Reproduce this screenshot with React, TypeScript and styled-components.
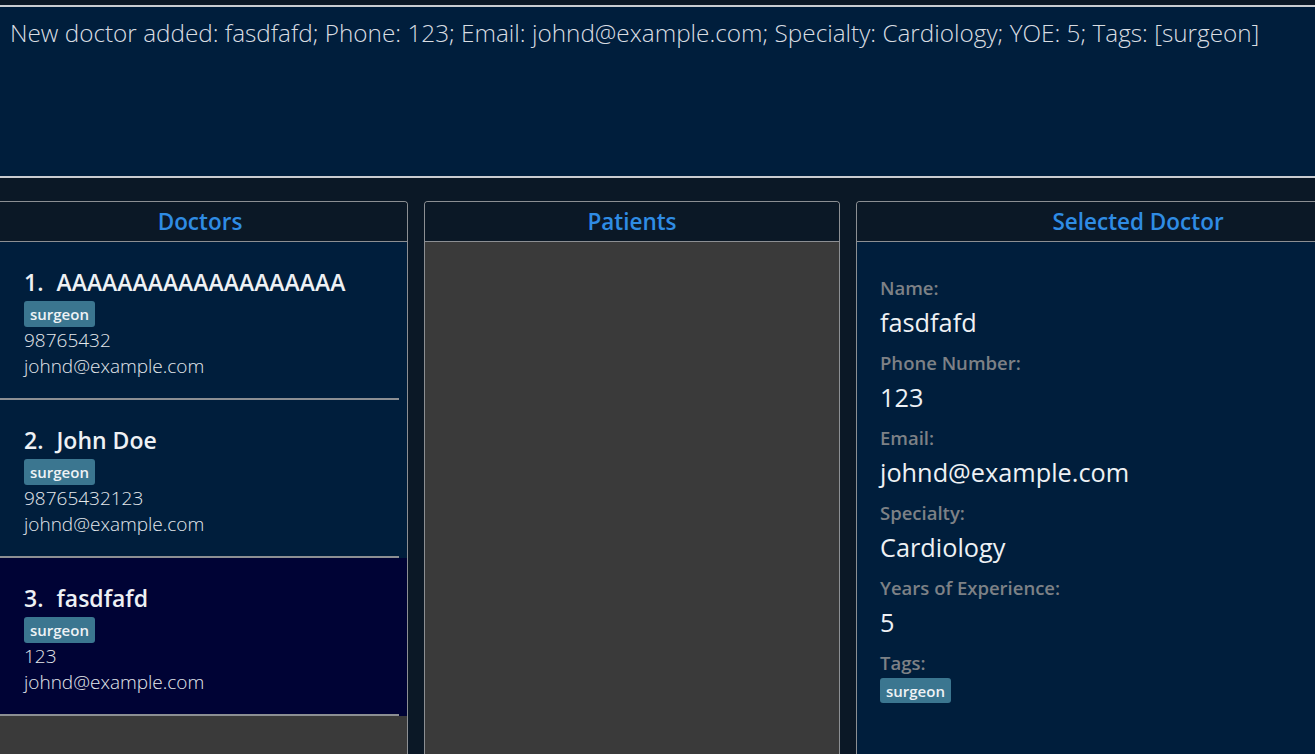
import { Fragment } from 'react';
import { createGlobalStyle, styled } from 'styled-components';

const GlobalStyle = createGlobalStyle`
  html, body {
    margin: 0;
    padding: 0;
    background: #0b1826;
    overflow: hidden;
  }
  * {
    box-sizing: border-box;
  }
`;

const Root = styled.div`
  width: 1315px;
  height: 754px;
  overflow: hidden;
  display: flex;
  flex-direction: column;
  padding-top: 5px;
  background: #0b1826;
  font-family: 'Open Sans', 'Noto Sans', sans-serif;
`;

const ResultBox = styled.div`
  height: 173px;
  flex-shrink: 0;
  background: #001e3c;
  border-top: 2px solid #c9ccd0;
  border-bottom: 2px solid #c9ccd0;
  padding: 11px 10px;
  color: #d9dde2;
  font-size: 24.3px;
  font-weight: 300;
  line-height: 30px;
  white-space: nowrap;
`;

const PanelRow = styled.div`
  flex: 1;
  display: flex;
  flex-direction: row;
  gap: 16px;
  margin-left: -8px;
  padding-top: 23px;
  min-height: 0;
`;

const Panel = styled.section<{ $width: number }>`
  width: ${(p) => p.$width}px;
  flex-shrink: 0;
  display: flex;
  flex-direction: column;
  border: 1.5px solid #8c8f93;
  border-bottom: none;
  border-radius: 4px 4px 0 0;
  overflow: hidden;
`;

const PanelHeader = styled.header`
  height: 40px;
  flex-shrink: 0;
  display: flex;
  align-items: center;
  justify-content: center;
  background: #0b1826;
  border-bottom: 1.5px solid #8c8f93;
  color: #2f8ce4;
  font-size: 22.5px;
  font-weight: 600;
`;

const PanelBody = styled.div<{ $bg: string }>`
  flex: 1;
  display: flex;
  flex-direction: column;
  background: ${(p) => p.$bg};
`;

const DoctorCell = styled.div<{ $selected?: boolean }>`
  height: 158px;
  flex-shrink: 0;
  display: flex;
  flex-direction: column;
  align-items: flex-start;
  padding: 26px 0 0 31px;
  background: ${(p) => (p.$selected ? '#000335' : '#001e3c')};
  position: relative;

  &::after {
    content: '';
    position: absolute;
    left: 0;
    right: 8px;
    bottom: 0;
    height: 2px;
    background: #8c8f93;
  }
`;

const DoctorName = styled.div`
  display: flex;
  gap: 13px;
  color: #eef1f4;
  font-size: 23px;
  font-weight: 600;
  line-height: 28px;
`;

const Tag = styled.span`
  margin-top: 5px;
  height: 26px;
  display: inline-flex;
  align-items: center;
  padding: 0 6px;
  background: #3b7690;
  border-radius: 3px;
  color: #eef2f5;
  font-size: 15px;
  font-weight: 600;
`;

const CellLine = styled.div`
  color: #e4e8ec;
  font-size: 19px;
  font-weight: 300;
  line-height: 26px;
  &:first-of-type {
    margin-top: 1px;
  }
`;

const Filler = styled.div`
  flex: 1;
  background: #3a3a3a;
`;

const DetailBody = styled.div`
  flex: 1;
  display: flex;
  flex-direction: column;
  align-items: flex-start;
  padding: 34px 23px 0;
  background: #001e3c;
`;

const DetailLabel = styled.div`
  color: #7d8186;
  font-size: 18.5px;
  font-weight: 600;
  line-height: 24px;
  &:not(:first-child) {
    margin-top: 14px;
  }
`;

const DetailValue = styled.div`
  margin-top: 7px;
  color: #eef1f4;
  font-size: 25.3px;
  font-weight: 400;
  line-height: 30px;
`;

const DetailTag = styled(Tag)`
  margin-top: 3px;
  height: 25px;
`;

const doctors = [
  { name: 'AAAAAAAAAAAAAAAAAAA', phone: '98765432', email: 'johnd@example.com' },
  { name: 'John Doe', phone: '98765432123', email: 'johnd@example.com' },
  { name: 'fasdfafd', phone: '123', email: 'johnd@example.com' },
];

const details = [
  ['Name:', 'fasdfafd'],
  ['Phone Number:', '123'],
  ['Email:', 'johnd@example.com'],
  ['Specialty:', 'Cardiology'],
  ['Years of Experience:', '5'],
];

export default function App() {
  return (
    <Root>
      <GlobalStyle />
      <ResultBox>
        New doctor added: fasdfafd; Phone: 123; Email: johnd@example.com; Specialty: Cardiology; YOE: 5; Tags: [surgeon]
      </ResultBox>
      <PanelRow>
        <Panel $width={416}>
          <PanelHeader>Doctors</PanelHeader>
          <PanelBody $bg="#3a3a3a">
            {doctors.map((d, i) => (
              <DoctorCell key={d.name} $selected={i === 2}>
                <DoctorName>
                  <span>{i + 1}.</span>
                  <span>{d.name}</span>
                </DoctorName>
                <Tag>surgeon</Tag>
                <CellLine>{d.phone}</CellLine>
                <CellLine>{d.email}</CellLine>
              </DoctorCell>
            ))}
            <Filler />
          </PanelBody>
        </Panel>
        <Panel $width={416}>
          <PanelHeader>Patients</PanelHeader>
          <PanelBody $bg="#3a3a3a" />
        </Panel>
        <Panel $width={564}>
          <PanelHeader>Selected Doctor</PanelHeader>
          <DetailBody>
            {details.map(([label, value]) => (
              <Fragment key={label}>
                <DetailLabel>{label}</DetailLabel>
                <DetailValue>{value}</DetailValue>
              </Fragment>
            ))}
            <DetailLabel>Tags:</DetailLabel>
            <DetailTag>surgeon</DetailTag>
          </DetailBody>
        </Panel>
      </PanelRow>
    </Root>
  );
}
